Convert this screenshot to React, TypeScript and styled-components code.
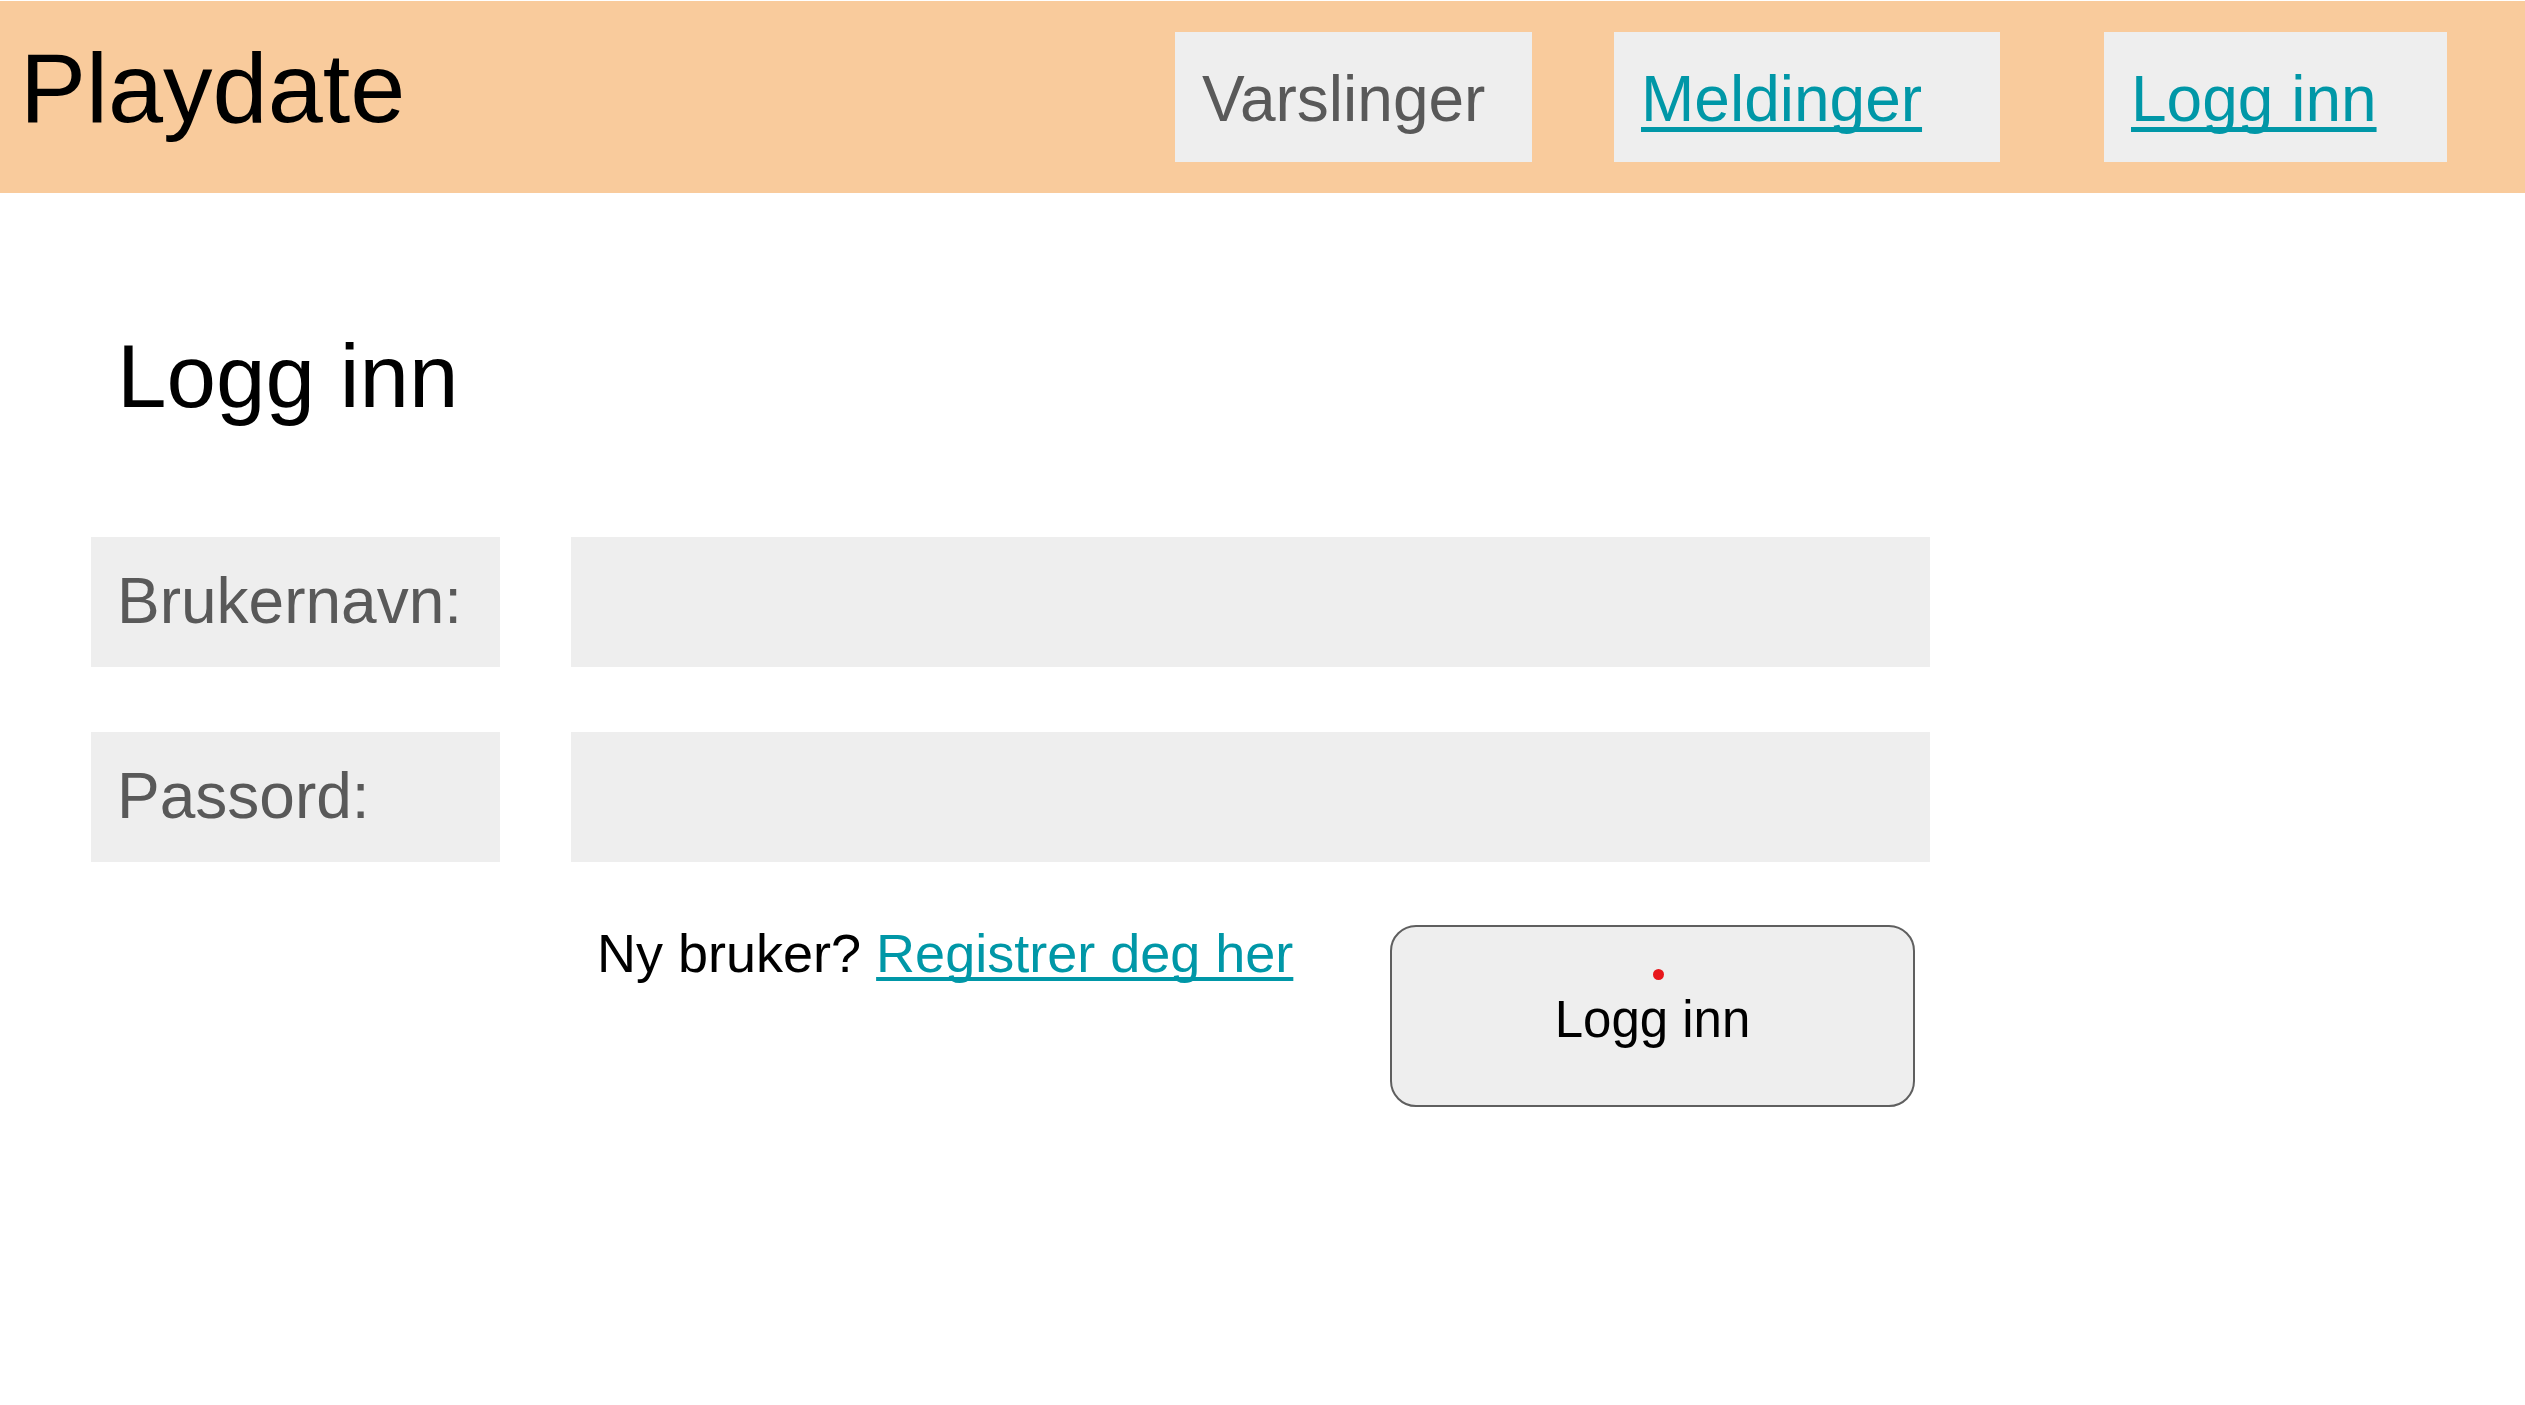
import React from "react";
import styled, { createGlobalStyle } from "styled-components";

const Global = createGlobalStyle`
  html, body {
    margin: 0;
    padding: 0;
    background: #ffffff;
    font-family: "Liberation Sans", Arial, sans-serif;
  }
  * { box-sizing: border-box; }
`;

const Page = styled.div`
  padding-top: 1px;
  min-height: 1405px;
  background: #ffffff;
`;

const Header = styled.header`
  display: flex;
  align-items: center;
  height: 192px;
  background: #f9cb9c;
  padding: 0 78px 0 20px;
`;

const Brand = styled.div`
  font-size: 99px;
  line-height: 1.15;
  color: #000000;
  margin-bottom: 19px;
`;

const Nav = styled.nav`
  display: flex;
  align-items: center;
  margin-left: auto;
`;

const NavItem = styled.div<{ $w: number; $ml: number }>`
  display: flex;
  align-items: center;
  width: ${(p) => p.$w}px;
  height: 130px;
  margin-left: ${(p) => p.$ml}px;
  padding: 6px 0 0 27px;
  background: #eeeeee;
  font-size: 64px;
  line-height: 1.15;
  color: #595959;
`;

const linkStyle = `
  color: #0097a7;
  text-decoration: underline;
  text-decoration-thickness: 0.075em;
  text-underline-offset: 0.1em;
  text-decoration-skip-ink: none;
  cursor: pointer;
`;

const NavLink = styled.a`
  ${linkStyle}
`;

const Main = styled.main`
  padding: 131px 0 0 91px;
`;

const Heading = styled.h1`
  margin: 0 0 109px 26px;
  font-size: 89px;
  font-weight: 400;
  line-height: 1.17;
  color: #000000;
`;

const Form = styled.div`
  display: grid;
  grid-template-columns: 409px 1359px;
  column-gap: 71px;
  row-gap: 65px;
`;

const Label = styled.div`
  display: flex;
  align-items: center;
  height: 130px;
  padding-left: 26px;
  background: #eeeeee;
  font-size: 64px;
  line-height: 1.15;
  color: #595959;
`;

const Field = styled.div`
  height: 130px;
  background: #eeeeee;
`;

const Footer = styled.div`
  grid-column: 2;
  display: flex;
  align-items: flex-start;
  justify-content: space-between;
  width: 1344px;
  margin-top: -2px;
  padding-left: 26px;
`;

const Hint = styled.p`
  margin: 1px 0 0;
  font-size: 54px;
  line-height: 1;
  color: #000000;
`;

const HintLink = styled.a`
  ${linkStyle}
`;

const Button = styled.button`
  position: relative;
  width: 525px;
  height: 182px;
  border: 2px solid #5f5f5f;
  border-radius: 26px;
  background: #eeeeee;
  font-family: "Liberation Sans", Arial, sans-serif;
  font-size: 51px;
  line-height: 1;
  color: #000000;
  padding: 6px 0 0;
  cursor: pointer;
`;

const Dot = styled.span`
  position: absolute;
  top: 42px;
  left: 50%;
  width: 11px;
  height: 11px;
  border-radius: 50%;
  background: #e8161b;
`;

export default function App() {
  return (
    <Page>
      <Global />
      <Header>
        <Brand>Playdate</Brand>
        <Nav>
          <NavItem $w={357} $ml={0}>Varslinger</NavItem>
          <NavItem $w={386} $ml={82}>
            <NavLink>Meldinger</NavLink>
          </NavItem>
          <NavItem $w={343} $ml={104}>
            <NavLink>Logg inn</NavLink>
          </NavItem>
        </Nav>
      </Header>
      <Main>
        <Heading>Logg inn</Heading>
        <Form>
          <Label>Brukernavn:</Label>
          <Field />
          <Label>Passord:</Label>
          <Field />
          <Footer>
            <Hint>
              Ny bruker? <HintLink>Registrer deg her</HintLink>
            </Hint>
            <Button>
              <Dot />
              Logg inn
            </Button>
          </Footer>
        </Form>
      </Main>
    </Page>
  );
}
